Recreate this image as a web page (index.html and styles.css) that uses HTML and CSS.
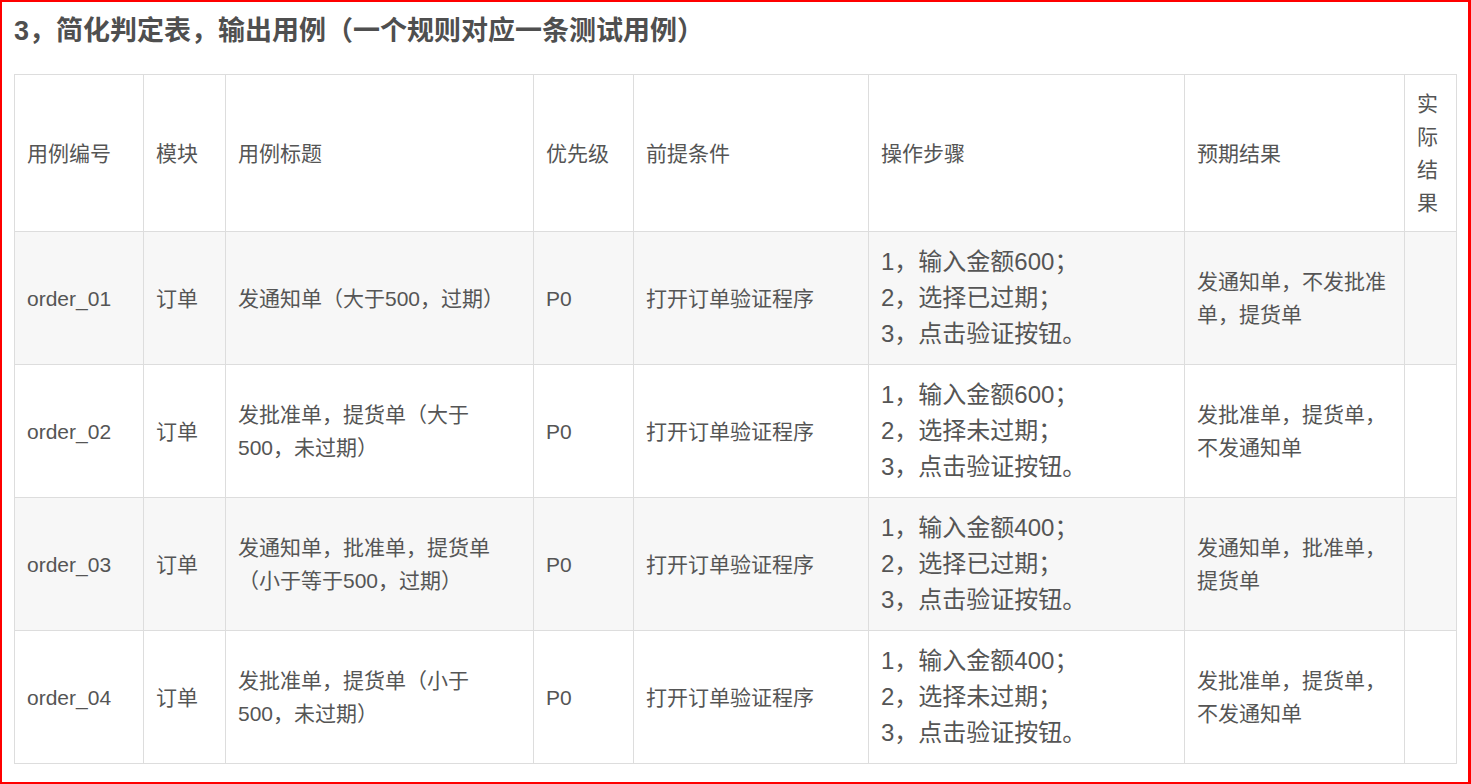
FILE: index.html
```html
<!DOCTYPE html>
<html lang="zh-CN">
<head>
<meta charset="utf-8">
<title>简化判定表</title>
<link rel="stylesheet" href="styles.css">
</head>
<body>
<div class="frame">
  <h2 class="title">3，简化判定表，输出用例（一个规则对应一条测试用例）</h2>
  <table class="cases">
    <colgroup>
      <col class="c-id">
      <col class="c-mod">
      <col class="c-title">
      <col class="c-pri">
      <col class="c-pre">
      <col class="c-steps">
      <col class="c-exp">
      <col class="c-act">
    </colgroup>
    <thead>
      <tr>
        <th>用例编号</th>
        <th>模块</th>
        <th>用例标题</th>
        <th>优先级</th>
        <th>前提条件</th>
        <th>操作步骤</th>
        <th>预期结果</th>
        <th>实际结果</th>
      </tr>
    </thead>
    <tbody>
      <tr class="alt">
        <td>order_01</td>
        <td>订单</td>
        <td>发通知单（大于500，过期）</td>
        <td>P0</td>
        <td>打开订单验证程序</td>
        <td class="steps"><p>1，输入金额600；</p><p>2，选择已过期；</p><p>3，点击验证按钮。</p></td>
        <td>发通知单，不发批准单，提货单</td>
        <td></td>
      </tr>
      <tr>
        <td>order_02</td>
        <td>订单</td>
        <td>发批准单，提货单（大于500，未过期）</td>
        <td>P0</td>
        <td>打开订单验证程序</td>
        <td class="steps"><p>1，输入金额600；</p><p>2，选择未过期；</p><p>3，点击验证按钮。</p></td>
        <td>发批准单，提货单，不发通知单</td>
        <td></td>
      </tr>
      <tr class="alt">
        <td>order_03</td>
        <td>订单</td>
        <td>发通知单，批准单，提货单（小于等于500，过期）</td>
        <td>P0</td>
        <td>打开订单验证程序</td>
        <td class="steps"><p>1，输入金额400；</p><p>2，选择已过期；</p><p>3，点击验证按钮。</p></td>
        <td>发通知单，批准单，提货单</td>
        <td></td>
      </tr>
      <tr>
        <td>order_04</td>
        <td>订单</td>
        <td>发批准单，提货单（小于500，未过期）</td>
        <td>P0</td>
        <td>打开订单验证程序</td>
        <td class="steps"><p>1，输入金额400；</p><p>2，选择未过期；</p><p>3，点击验证按钮。</p></td>
        <td>发批准单，提货单，不发通知单</td>
        <td></td>
      </tr>
    </tbody>
  </table>
</div>
</body>
</html>
```

FILE: styles.css
```css
html, body {
  margin: 0;
  padding: 0;
  background: #fff;
}

body {
  font-family: "Liberation Sans", "Noto Sans CJK SC", sans-serif;
  color: #555;
}

.frame {
  box-sizing: border-box;
  width: 1471px;
  height: 784px;
  border: 2px solid #f00;
  border-right-width: 3px;
  padding: 0 12px;
  overflow: hidden;
}

.title {
  margin: 10px 0 0;
  font-size: 27px;
  line-height: 39px;
  font-weight: bold;
  color: #4f4f4f;
}

.cases {
  margin-top: 23px;
  border-collapse: collapse;
  table-layout: fixed;
  width: 1443px;
  font-size: 21px;
  line-height: 33px;
}

.c-id { width: 129px; }
.c-mod { width: 82px; }
.c-title { width: 308px; }
.c-pri { width: 100px; }
.c-pre { width: 235px; }
.c-steps { width: 316px; }
.c-exp { width: 220px; }
.c-act { width: 52px; }

.cases th,
.cases td {
  border: 1px solid #ddd;
  padding: 12px;
  text-align: left;
  vertical-align: middle;
  font-weight: normal;
  color: #555;
}

.cases tbody tr {
  height: 133px;
}

.cases tr.alt td {
  background: #f7f7f7;
}

.cases td.steps {
  font-size: 24px;
  line-height: 36px;
}

.cases td.steps p {
  margin: 0;
}
```
